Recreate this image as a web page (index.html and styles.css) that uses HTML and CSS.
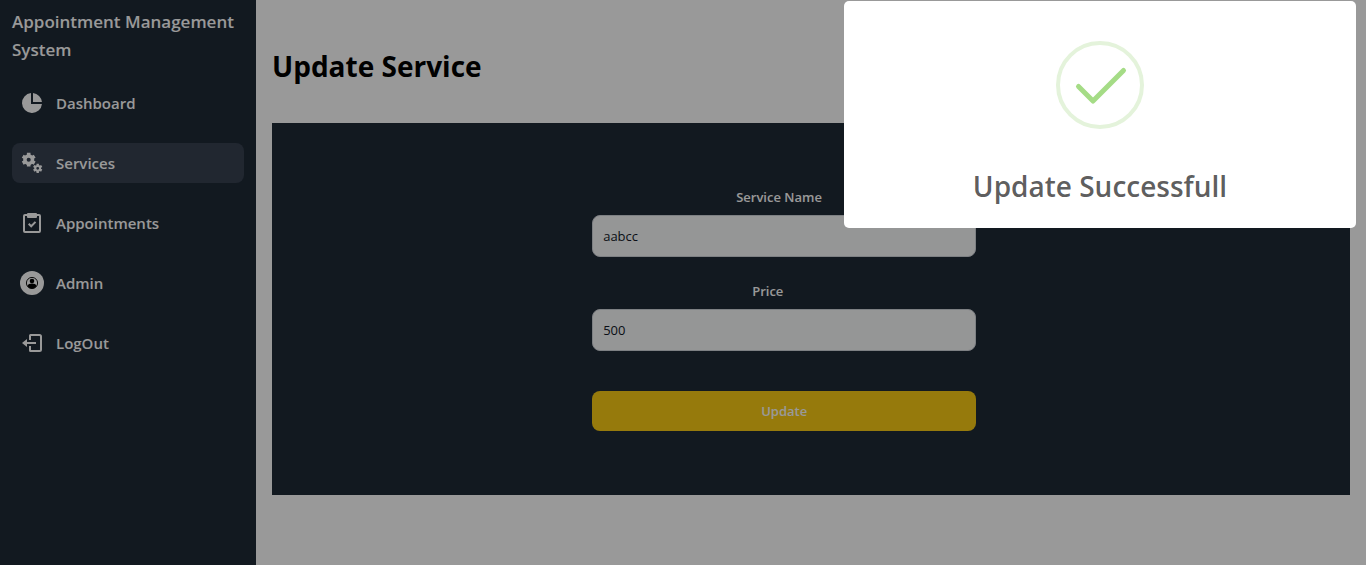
FILE: index.html
```html
<!DOCTYPE html>
<html lang="en">
<head>
<meta charset="utf-8">
<meta name="viewport" content="width=device-width, initial-scale=1">
<title>Appointment Management System</title>
<link rel="stylesheet" href="styles.css">
</head>
<body>
<div class="app">
  <aside class="sidebar">
    <p class="brand">Appointment Management System</p>
    <nav class="menu">
      <a class="menu-item" href="#">
        <svg class="icon" viewBox="0 0 24 24" fill="currentColor" aria-hidden="true"><path d="M11 2.05V13h10.95A10 10 0 1 1 11 2.05z"/><path d="M13 2.05A10 10 0 0 1 21.95 11H13z"/></svg>
        Dashboard
      </a>
      <a class="menu-item active" href="#">
        <svg class="icon" viewBox="0 0 24 24" fill="none" stroke="currentColor" aria-hidden="true">
          <circle cx="8.7" cy="8.7" r="3.8" stroke-width="3.5"/>
          <path stroke-width="3.6" d="M8.7 1.8v2.6M8.7 13v2.6M2.7 5.25l2.25 1.3M12.45 10.85l2.25 1.3M2.7 12.15l2.25-1.3M12.45 6.55l2.25-1.3"/>
          <circle cx="17.7" cy="17.3" r="2.4" stroke-width="2"/>
          <path stroke-width="2.4" d="M17.7 12.7v2M17.7 19.9v2M13.7 15l1.75 1M19.95 18.6l1.75 1M13.7 19.6l1.75-1M19.95 16l1.75-1"/>
        </svg>
        Services
      </a>
      <a class="menu-item" href="#">
        <svg class="icon" viewBox="0 0 24 24" fill="none" stroke="currentColor" stroke-width="2" aria-hidden="true"><rect x="4" y="4" width="16" height="17" rx="1"/><path fill="currentColor" stroke="none" d="M8 2h8a1 1 0 0 1 1 1v3a1 1 0 0 1-1 1H8a1 1 0 0 1-1-1V3a1 1 0 0 1 1-1z"/><path d="M8.7 12.8l2.5 2.5 4.3-4.4"/></svg>
        Appointments
      </a>
      <a class="menu-item" href="#">
        <svg class="icon" viewBox="0 0 24 24" aria-hidden="true"><circle cx="12" cy="12" r="12" fill="currentColor"/><circle cx="12" cy="12" r="5.6" fill="none" stroke="#000" stroke-width=".9"/><circle cx="12" cy="10" r="2.3"/><path d="M7.4 15c.5-1.7 2.3-2.5 4.6-2.5s4.1.8 4.6 2.5A5.5 5.5 0 0 1 12 17.6a5.5 5.5 0 0 1-4.6-2.6z"/></svg>
        Admin
      </a>
      <a class="menu-item" href="#">
        <svg class="icon" viewBox="0 0 24 24" fill="none" stroke="currentColor" stroke-width="2" aria-hidden="true"><path d="M10 9V4.5a.5.5 0 0 1 .5-.5h9a1.5 1.5 0 0 1 1.5 1.5v13a1.5 1.5 0 0 1-1.5 1.5h-9a.5.5 0 0 1-.5-.5V15M5 12h11"/><path fill="currentColor" stroke="none" d="M7 8v8l-5-4z"/></svg>
        LogOut
      </a>
    </nav>
  </aside>
  <main class="content">
    <h1 class="page-title">Update Service</h1>
    <section class="card">
      <form class="form">
        <label class="label label-name" for="name">Service Name</label>
        <input class="input" id="name" type="text" value="aabcc">
        <label class="label label-price" for="price">Price</label>
        <input class="input" id="price" type="text" value="500">
        <button class="submit" type="button">Update</button>
      </form>
    </section>
  </main>
</div>
<div class="overlay">
  <div class="modal" role="alertdialog" aria-labelledby="modal-title">
    <svg class="success" viewBox="0 0 88 88" fill="none" aria-hidden="true"><circle cx="44" cy="44" r="42" stroke="#e4f3db" stroke-width="4"/><path d="M22.5 45.5L37 60l30.5-30.5" stroke="#a5dc86" stroke-width="5" stroke-linecap="round" stroke-linejoin="round"/></svg>
    <h2 class="modal-title" id="modal-title">Update Successfull</h2>
  </div>
</div>
</body>
</html>
```

FILE: styles.css
```css
*,
*::before,
*::after {
  box-sizing: border-box;
}

body {
  margin: 0;
  background: #fff;
  color: #000;
  font-family: "Open Sans", "Noto Sans", sans-serif;
}

h1,
h2,
p {
  margin: 0;
}

.app {
  display: flex;
  min-height: 100vh;
}

.sidebar {
  flex: 0 0 256px;
  padding: 8px 12px;
  background: #1f2a36;
  color: #fff;
}

.brand {
  margin-bottom: 19px;
  font-size: 17px;
  font-weight: 600;
  line-height: 28px;
}

.menu {
  display: flex;
  flex-direction: column;
  gap: 20px;
}

.menu-item {
  display: flex;
  align-items: center;
  gap: 12px;
  height: 40px;
  padding: 0 8px;
  border-radius: 8px;
  color: inherit;
  font-size: 15px;
  font-weight: 600;
  text-decoration: none;
}

.menu-item.active {
  background: #374151;
}

.icon {
  flex: none;
  width: 24px;
  height: 24px;
}

.content {
  flex: 1;
  min-width: 0;
  padding: 48px 16px;
}

.page-title {
  margin-bottom: 39px;
  font-size: 28px;
  font-weight: 700;
  line-height: 36px;
}

.card {
  padding: 64px 16px 64px 29.7%;
  background: #1f2a36;
}

.form {
  display: flex;
  flex-direction: column;
  max-width: 384px;
}

.label {
  margin-bottom: 8px;
  color: #fff;
  font-size: 13px;
  font-weight: 600;
  line-height: 20px;
}

.label-name {
  padding-left: 144px;
}

.label-price {
  padding-left: 160px;
}

.input {
  width: 100%;
  height: 42px;
  margin-bottom: 24px;
  padding: 10px;
  border: 1px solid #d1d5db;
  border-radius: 8px;
  background: #f9fafb;
  color: #111827;
  font: 400 13px/20px "Open Sans", "Noto Sans", sans-serif;
}

.submit {
  height: 40px;
  margin-top: 16px;
  border: 0;
  border-radius: 8px;
  background: #facc15;
  color: #fff;
  font: 600 13px/20px "Open Sans", "Noto Sans", sans-serif;
}

.overlay {
  position: fixed;
  inset: 0;
  display: flex;
  align-items: flex-start;
  justify-content: flex-end;
  padding: 1px 10px;
  background: rgba(0, 0, 0, 0.4);
}

.modal {
  display: flex;
  flex-direction: column;
  align-items: center;
  gap: 39px;
  width: 512px;
  max-width: 100%;
  padding: 40px 16px 24px;
  border-radius: 5px;
  background: #fff;
}

.success {
  width: 88px;
  height: 88px;
}

.modal-title {
  color: rgba(0, 0, 0, 0.65);
  font-size: 28px;
  font-weight: 600;
  line-height: 36px;
}
```
